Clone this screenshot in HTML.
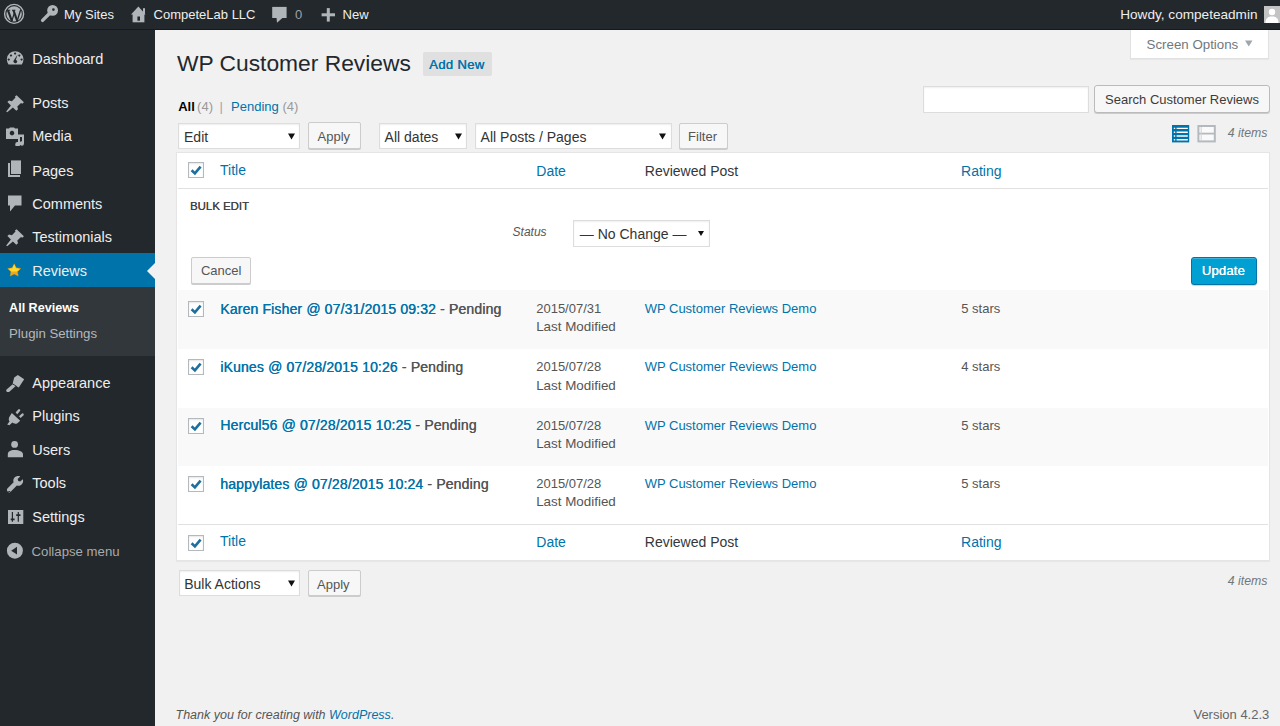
<!DOCTYPE html><html><head><meta charset="utf-8"><style>
html,body{margin:0;padding:0;width:1280px;height:726px;overflow:hidden;background:#f1f1f1;font-family:"Liberation Sans",sans-serif;}
.t{position:absolute;white-space:nowrap;}
.r{position:absolute;box-sizing:border-box;}
svg{position:absolute;}
</style></head><body>
<div class="r" style="left:0px;top:0px;width:1280px;height:30px;background:#23282d;"></div>
<div class="r" style="left:0px;top:29px;width:1280px;height:1px;background:#16191d;"></div>
<div class="r" style="left:0px;top:30px;width:155px;height:696px;background:#23282d;"></div>
<div class="r" style="left:0px;top:287px;width:155px;height:69px;background:#32373c;"></div>
<div class="r" style="left:0px;top:253px;width:155px;height:34px;background:#0073aa;"></div>
<div class="t" style="left:64.09px;top:4.50px;font-size:13px;line-height:20px;color:#eeeeee;">My Sites</div>
<div class="t" style="left:153.59px;top:4.50px;font-size:13px;line-height:20px;color:#eeeeee;">CompeteLab LLC</div>
<div class="t" style="left:295.09px;top:4.50px;font-size:13px;line-height:20px;color:#9ea3a8;">0</div>
<div class="t" style="left:342.59px;top:4.50px;font-size:13px;line-height:20px;color:#eeeeee;">New</div>
<div class="t" style="right:22.50px;top:5.09px;font-size:13.6px;line-height:20px;color:#eeeeee;">Howdy, competeadmin</div>
<div class="r" style="left:1264px;top:6px;width:16px;height:17px;background:#c7c7c7;"></div>
<div class="t" style="left:32.28px;top:48.98px;font-size:14.5px;line-height:20px;color:#eeeeee;">Dashboard</div>
<div class="t" style="left:32.28px;top:93.18px;font-size:14.5px;line-height:20px;color:#eeeeee;">Posts</div>
<div class="t" style="left:32.28px;top:126.48px;font-size:14.5px;line-height:20px;color:#eeeeee;">Media</div>
<div class="t" style="left:32.28px;top:160.98px;font-size:14.5px;line-height:20px;color:#eeeeee;">Pages</div>
<div class="t" style="left:32.28px;top:193.98px;font-size:14.5px;line-height:20px;color:#eeeeee;">Comments</div>
<div class="t" style="left:32.28px;top:227.48px;font-size:14.5px;line-height:20px;color:#eeeeee;">Testimonials</div>
<div class="t" style="left:32.28px;top:260.98px;font-size:14.5px;line-height:20px;color:#eeeeee;">Reviews</div>
<div class="t" style="left:9.04px;top:297.63px;font-size:12.6px;line-height:20px;color:#ffffff;font-weight:700;">All Reviews</div>
<div class="t" style="left:9.08px;top:324.13px;font-size:13.2px;line-height:20px;color:#b4b9be;">Plugin Settings</div>
<div class="t" style="left:32.28px;top:372.98px;font-size:14.5px;line-height:20px;color:#eeeeee;">Appearance</div>
<div class="t" style="left:32.28px;top:406.48px;font-size:14.5px;line-height:20px;color:#eeeeee;">Plugins</div>
<div class="t" style="left:32.28px;top:439.98px;font-size:14.5px;line-height:20px;color:#eeeeee;">Users</div>
<div class="t" style="left:32.28px;top:473.48px;font-size:14.5px;line-height:20px;color:#eeeeee;">Tools</div>
<div class="t" style="left:32.28px;top:506.98px;font-size:14.5px;line-height:20px;color:#eeeeee;">Settings</div>
<div class="t" style="left:31.58px;top:541.73px;font-size:13.2px;line-height:20px;color:#aaaaaa;">Collapse menu</div>
<div class="t" style="left:176.90px;top:52.80px;font-size:22.8px;line-height:20px;color:#23282d;">WP Customer Reviews</div>
<div class="r" style="left:422.6px;top:51.6px;width:69.39999999999998px;height:24.4px;background:#e0e0e0;border-radius:2px;"></div>
<div class="t" style="left:429.09px;top:54.50px;font-size:13px;line-height:20px;color:#0073aa;letter-spacing:0.38px;text-shadow:0.35px 0 0 #0073aa;">Add New</div>
<div class="r" style="left:1130px;top:30px;width:139px;height:29px;background:#ffffff;border:1px solid #e1e1e1;border-top:none;box-shadow:0 1px 1px rgba(0,0,0,.04);"></div>
<div class="t" style="left:1146.57px;top:35.19px;font-size:13.3px;line-height:20px;color:#72777c;">Screen Options</div>
<div class="t" style="left:178.22px;top:96.50px;font-size:13px;line-height:20px;color:#000000;font-weight:700;">All</div>
<div class="t" style="left:197.09px;top:96.50px;font-size:13px;line-height:20px;color:#999999;">(4)</div>
<div class="t" style="left:219.59px;top:96.50px;font-size:13px;line-height:20px;color:#a0a5aa;">|</div>
<div class="t" style="left:231.09px;top:96.50px;font-size:13px;line-height:20px;color:#0073aa;">Pending</div>
<div class="t" style="left:282.49px;top:96.50px;font-size:13px;line-height:20px;color:#999999;">(4)</div>
<div class="r" style="left:923px;top:85.5px;width:166px;height:27.5px;background:#ffffff;border:1px solid #ddd;box-shadow:inset 0 1px 2px rgba(0,0,0,.07);"></div>
<div class="r" style="left:1094px;top:85px;width:176px;height:28px;background:#f7f7f7;border:1px solid #bbb;border-radius:3px;box-shadow:0 1px 0 #ccc;"></div>
<div class="t" style="left:1105.09px;top:89.50px;font-size:13px;line-height:20px;color:#3c3c3c;">Search Customer Reviews</div>
<div class="t" style="right:12.50px;top:122.74px;font-size:12.3px;line-height:20px;color:#72777c;font-style:italic;">4 items</div>
<div class="r" style="left:178px;top:123px;width:122px;height:26.19999999999999px;background:#ffffff;border:1px solid #ddd;box-shadow:inset 0 1px 2px rgba(0,0,0,.07);"></div>
<div class="t" style="left:184.02px;top:126.65px;font-size:14px;line-height:20px;color:#333333;">Edit</div>
<svg style="left:288px;top:132.5px" width="7" height="7" viewBox="0 0 7 7"><path d="M0 0.6H7L3.5 6.6Z" fill="#111"/></svg>
<div class="r" style="left:307.5px;top:122px;width:53.5px;height:27px;background:#f7f7f7;border:1px solid #cccccc;border-radius:2px;box-shadow:0 1px 0 #cccccc;"></div>
<div class="t" style="left:317.59px;top:127.00px;font-size:13px;line-height:20px;color:#555555;">Apply</div>
<div class="r" style="left:379px;top:123px;width:88px;height:26.19999999999999px;background:#ffffff;border:1px solid #ddd;box-shadow:inset 0 1px 2px rgba(0,0,0,.07);"></div>
<div class="t" style="left:384.62px;top:126.65px;font-size:14px;line-height:20px;color:#333333;">All dates</div>
<svg style="left:454.5px;top:132.5px" width="7" height="7" viewBox="0 0 7 7"><path d="M0 0.6H7L3.5 6.6Z" fill="#111"/></svg>
<div class="r" style="left:475px;top:123px;width:197px;height:26.19999999999999px;background:#ffffff;border:1px solid #ddd;box-shadow:inset 0 1px 2px rgba(0,0,0,.07);"></div>
<div class="t" style="left:480.62px;top:126.65px;font-size:14px;line-height:20px;color:#333333;">All Posts / Pages</div>
<svg style="left:659px;top:132.5px" width="7" height="7" viewBox="0 0 7 7"><path d="M0 0.6H7L3.5 6.6Z" fill="#111"/></svg>
<div class="r" style="left:679px;top:123px;width:49px;height:26px;background:#f7f7f7;border:1px solid #cccccc;border-radius:2px;box-shadow:0 1px 0 #cccccc;"></div>
<div class="t" style="left:688.09px;top:127.00px;font-size:13px;line-height:20px;color:#555555;">Filter</div>
<div class="r" style="left:176px;top:152px;width:1094px;height:408.5px;background:#ffffff;border:1px solid #e5e5e5;box-shadow:0 1px 1px rgba(0,0,0,.04);"></div>
<div class="r" style="left:178px;top:188px;width:1090px;height:1px;background:#e1e1e1;"></div>
<div class="r" style="left:178px;top:524px;width:1090px;height:1px;background:#e1e1e1;"></div>
<div class="r" style="left:188px;top:162.2px;width:16px;height:16px;border:1px solid #b4b9be;background:#fff;box-shadow:inset 0 1px 2px rgba(0,0,0,.1);"></div>
<svg style="left:188px;top:162.2px" width="16" height="16" viewBox="0 0 16 16"><path d="M3.6 8.2L6.9 11.4L12.6 4.6" stroke="#1f6f9e" stroke-width="2.6" fill="none"/></svg>
<div class="t" style="left:220.02px;top:160.15px;font-size:14px;line-height:20px;color:#0073aa;">Title</div>
<div class="t" style="left:536.32px;top:160.65px;font-size:14px;line-height:20px;color:#0073aa;">Date</div>
<div class="t" style="left:644.82px;top:160.65px;font-size:14px;line-height:20px;color:#32373c;">Reviewed Post</div>
<div class="t" style="left:961.02px;top:160.65px;font-size:14px;line-height:20px;color:#0073aa;">Rating</div>
<div class="t" style="left:190.00px;top:195.65px;font-size:11.4px;line-height:20px;color:#444444;text-shadow:0.25px 0 0 #444;">BULK EDIT</div>
<div class="t" style="left:512.56px;top:221.84px;font-size:12px;line-height:20px;color:#555555;font-style:italic;">Status</div>
<div class="r" style="left:573px;top:219.5px;width:137px;height:27.0px;background:#ffffff;border:1px solid #ddd;box-shadow:inset 0 1px 2px rgba(0,0,0,.07);"></div>
<div class="t" style="left:579.82px;top:224.15px;font-size:14px;line-height:20px;color:#333333;">— No Change —</div>
<svg style="left:697.5px;top:230px" width="7" height="7" viewBox="0 0 7 7"><path d="M0 1H6L3 6Z" fill="#111"/></svg>
<div class="r" style="left:191px;top:257px;width:60px;height:27px;background:#f7f7f7;border:1px solid #cccccc;border-radius:2px;box-shadow:0 1px 0 #cccccc;"></div>
<div class="t" style="left:200.89px;top:261.30px;font-size:13px;line-height:20px;color:#555555;">Cancel</div>
<div class="r" style="left:1191px;top:257px;width:66px;height:28px;background:#00a0d2;border:1px solid #0073aa;border-radius:3px;box-shadow:inset 0 1px 0 rgba(120,200,230,.5),0 1px 0 rgba(0,0,0,.15);"></div>
<div class="t" style="left:1201.69px;top:261.10px;font-size:13px;line-height:20px;color:#ffffff;letter-spacing:0.2px;text-shadow:0.4px 0 0 #fff;">Update</div>
<div class="r" style="left:178px;top:289.5px;width:1090px;height:59.5px;background:#f9f9f9;"></div>
<div class="r" style="left:188px;top:301.0px;width:16px;height:16px;border:1px solid #b4b9be;background:#fff;box-shadow:inset 0 1px 2px rgba(0,0,0,.1);"></div>
<svg style="left:188px;top:301.0px" width="16" height="16" viewBox="0 0 16 16"><path d="M3.6 8.2L6.9 11.4L12.6 4.6" stroke="#1f6f9e" stroke-width="2.6" fill="none"/></svg>
<div class="t" style="left:220.2px;top:298.85px;font-size:14px;line-height:20px;letter-spacing:0.15px;text-shadow:0.3px 0 0 #0073aa;color:#0073aa">Karen Fisher @ 07/31/2015 09:32 <span style="color:#555;text-shadow:0.3px 0 0 #555">- Pending</span></div>
<div class="t" style="left:536.19px;top:299.20px;font-size:13px;line-height:20px;color:#555555;">2015/07/31</div>
<div class="t" style="left:536.16px;top:317.26px;font-size:13.4px;line-height:20px;color:#555555;">Last Modified</div>
<div class="t" style="left:644.69px;top:299.20px;font-size:13px;line-height:20px;color:#0073aa;">WP Customer Reviews Demo</div>
<div class="t" style="left:961.29px;top:299.20px;font-size:13px;line-height:20px;color:#555555;">5 stars</div>
<div class="r" style="left:188px;top:359.25px;width:16px;height:16px;border:1px solid #b4b9be;background:#fff;box-shadow:inset 0 1px 2px rgba(0,0,0,.1);"></div>
<svg style="left:188px;top:359.25px" width="16" height="16" viewBox="0 0 16 16"><path d="M3.6 8.2L6.9 11.4L12.6 4.6" stroke="#1f6f9e" stroke-width="2.6" fill="none"/></svg>
<div class="t" style="left:220.2px;top:357.10px;font-size:14px;line-height:20px;letter-spacing:0.15px;text-shadow:0.3px 0 0 #0073aa;color:#0073aa">iKunes @ 07/28/2015 10:26 <span style="color:#555;text-shadow:0.3px 0 0 #555">- Pending</span></div>
<div class="t" style="left:536.19px;top:357.45px;font-size:13px;line-height:20px;color:#555555;">2015/07/28</div>
<div class="t" style="left:536.16px;top:375.51px;font-size:13.4px;line-height:20px;color:#555555;">Last Modified</div>
<div class="t" style="left:644.69px;top:357.45px;font-size:13px;line-height:20px;color:#0073aa;">WP Customer Reviews Demo</div>
<div class="t" style="left:961.29px;top:357.45px;font-size:13px;line-height:20px;color:#555555;">4 stars</div>
<div class="r" style="left:178px;top:407.5px;width:1090px;height:58.5px;background:#f9f9f9;"></div>
<div class="r" style="left:188px;top:417.5px;width:16px;height:16px;border:1px solid #b4b9be;background:#fff;box-shadow:inset 0 1px 2px rgba(0,0,0,.1);"></div>
<svg style="left:188px;top:417.5px" width="16" height="16" viewBox="0 0 16 16"><path d="M3.6 8.2L6.9 11.4L12.6 4.6" stroke="#1f6f9e" stroke-width="2.6" fill="none"/></svg>
<div class="t" style="left:220.2px;top:415.35px;font-size:14px;line-height:20px;letter-spacing:0.15px;text-shadow:0.3px 0 0 #0073aa;color:#0073aa">Hercul56 @ 07/28/2015 10:25 <span style="color:#555;text-shadow:0.3px 0 0 #555">- Pending</span></div>
<div class="t" style="left:536.19px;top:415.70px;font-size:13px;line-height:20px;color:#555555;">2015/07/28</div>
<div class="t" style="left:536.16px;top:433.76px;font-size:13.4px;line-height:20px;color:#555555;">Last Modified</div>
<div class="t" style="left:644.69px;top:415.70px;font-size:13px;line-height:20px;color:#0073aa;">WP Customer Reviews Demo</div>
<div class="t" style="left:961.29px;top:415.70px;font-size:13px;line-height:20px;color:#555555;">5 stars</div>
<div class="r" style="left:188px;top:475.75px;width:16px;height:16px;border:1px solid #b4b9be;background:#fff;box-shadow:inset 0 1px 2px rgba(0,0,0,.1);"></div>
<svg style="left:188px;top:475.75px" width="16" height="16" viewBox="0 0 16 16"><path d="M3.6 8.2L6.9 11.4L12.6 4.6" stroke="#1f6f9e" stroke-width="2.6" fill="none"/></svg>
<div class="t" style="left:220.2px;top:473.60px;font-size:14px;line-height:20px;letter-spacing:0.15px;text-shadow:0.3px 0 0 #0073aa;color:#0073aa">happylates @ 07/28/2015 10:24 <span style="color:#555;text-shadow:0.3px 0 0 #555">- Pending</span></div>
<div class="t" style="left:536.19px;top:473.95px;font-size:13px;line-height:20px;color:#555555;">2015/07/28</div>
<div class="t" style="left:536.16px;top:492.01px;font-size:13.4px;line-height:20px;color:#555555;">Last Modified</div>
<div class="t" style="left:644.69px;top:473.95px;font-size:13px;line-height:20px;color:#0073aa;">WP Customer Reviews Demo</div>
<div class="t" style="left:961.29px;top:473.95px;font-size:13px;line-height:20px;color:#555555;">5 stars</div>
<div class="r" style="left:188px;top:535px;width:16px;height:16px;border:1px solid #b4b9be;background:#fff;box-shadow:inset 0 1px 2px rgba(0,0,0,.1);"></div>
<svg style="left:188px;top:535px" width="16" height="16" viewBox="0 0 16 16"><path d="M3.6 8.2L6.9 11.4L12.6 4.6" stroke="#1f6f9e" stroke-width="2.6" fill="none"/></svg>
<div class="t" style="left:220.02px;top:531.45px;font-size:14px;line-height:20px;color:#0073aa;">Title</div>
<div class="t" style="left:536.32px;top:531.95px;font-size:14px;line-height:20px;color:#0073aa;">Date</div>
<div class="t" style="left:644.82px;top:531.95px;font-size:14px;line-height:20px;color:#32373c;">Reviewed Post</div>
<div class="t" style="left:961.02px;top:531.95px;font-size:14px;line-height:20px;color:#0073aa;">Rating</div>
<div class="r" style="left:179px;top:570px;width:121px;height:26px;background:#ffffff;border:1px solid #ddd;box-shadow:inset 0 1px 2px rgba(0,0,0,.07);"></div>
<div class="t" style="left:184.22px;top:574.35px;font-size:14px;line-height:20px;color:#333333;">Bulk Actions</div>
<svg style="left:288px;top:580.2px" width="7" height="7" viewBox="0 0 7 7"><path d="M0 0.6H7L3.5 6.6Z" fill="#111"/></svg>
<div class="r" style="left:308px;top:570px;width:53px;height:26px;background:#f7f7f7;border:1px solid #cccccc;border-radius:2px;box-shadow:0 1px 0 #cccccc;"></div>
<div class="t" style="left:317.09px;top:574.70px;font-size:13px;line-height:20px;color:#555555;">Apply</div>
<div class="t" style="right:12.50px;top:570.74px;font-size:12.3px;line-height:20px;color:#72777c;font-style:italic;">4 items</div>
<div class="t" style="left:175.5px;top:704.57px;font-size:12.5px;line-height:20px;font-style:italic;color:#555">Thank you for creating with <span style="color:#0073aa">WordPress</span>.</div>
<div class="t" style="right:10.70px;top:705.10px;font-size:13px;line-height:20px;color:#666666;">Version 4.2.3</div>
<svg style="left:3px;top:3px" width="22" height="22" viewBox="0 0 22 22"><circle cx="11.1" cy="10.9" r="9.5" fill="none" stroke="#b0b5ba" stroke-width="1.4"/><circle cx="11.1" cy="10.9" r="7.7" fill="#b0b5ba"/><g fill="none" stroke="#23282d" stroke-linecap="butt"><path d="M4.9 7.2L8.9 18.2" stroke-width="2.1"/><path d="M8.7 18.2L11.3 10.2" stroke-width="1.2"/><path d="M10.4 7.2L14.3 18.2" stroke-width="2.1"/><path d="M14.1 18.2L17.6 7" stroke-width="1.3"/><path d="M3.6 7.2H7.2M9 7.2H12.4" stroke-width="1.1"/></g></svg>
<svg style="left:39px;top:4px" width="20" height="20" viewBox="0 0 20 20"><circle cx="13.6" cy="6.4" r="5.4" fill="#b0b5ba"/><circle cx="14.4" cy="5.6" r="1.3" fill="#23282d"/><path d="M10.5 9.5L3.6 16.4" stroke="#b0b5ba" stroke-width="3.4" stroke-linecap="round"/></svg>
<svg style="left:130px;top:6px" width="17" height="17" viewBox="0 0 17 17"><path d="M1 8.6L8.4 0.6L15.6 8.6Z" fill="#b0b5ba"/><rect x="13" y="2.2" width="2" height="6" fill="#b0b5ba"/><rect x="2.6" y="8" width="11.8" height="8.3" fill="#b0b5ba"/><rect x="7.4" y="10.5" width="2.6" height="4.2" fill="#23282d"/></svg>
<svg style="left:272px;top:6px" width="16" height="18" viewBox="0 0 16 18"><rect x="0.2" y="0.9" width="14.4" height="11.1" fill="#b0b5ba"/><path d="M4.5 11.5H11L5 16.8Z" fill="#b0b5ba"/></svg>
<svg style="left:321px;top:8px" width="15" height="14" viewBox="0 0 15 14"><rect x="0.6" y="5.3" width="13.4" height="3" fill="#b0b5ba"/><rect x="5.8" y="0.1" width="3" height="13.5" fill="#b0b5ba"/></svg>
<svg style="left:1264px;top:6px" width="16" height="17" viewBox="0 0 16 17"><rect width="16" height="17" fill="#c4c4c4"/><circle cx="8" cy="6" r="3.2" fill="#fff"/><path d="M1.5 17C1.5 12 4 10.5 8 10.5S14.5 12 14.5 17Z" fill="#fff"/></svg>
<svg style="left:5px;top:49px" width="21" height="18" viewBox="0 0 21 18"><path fill-rule="evenodd" fill="#b0b5ba" d="M3.5 15.4H16.8A8.3 8.3 0 1 0 3.5 15.4Z M10.1 3.6a1 1 0 1 0 .01 0Z M6 5.4a1 1 0 1 0 .01 0Z M14.3 5.4a1 1 0 1 0 .01 0Z M3.7 9.5a1 1 0 1 0 .01 0Z M16.6 9.5a1 1 0 1 0 .01 0Z M9.6 13.9a1.6 1.6 0 1 0 1.2-2.9L12.6 5.6L8.9 11.2a1.6 1.6 0 0 0 .7 2.7Z"/></svg>
<svg style="left:5px;top:94px" width="20" height="19" viewBox="0 0 20 19"><path fill="#b0b5ba" d="M11.6 1.2L18.9 8.3L17.3 9.7L16 8.9L12.3 12.4L13 15.2L11.3 16.8L7.9 13.4L2.2 18.2L1.2 17.5L5.9 11.5L2.4 8L4 6.5L6.9 7.2L10.5 3.6L9.9 2.5Z"/></svg>
<svg style="left:5px;top:127px" width="20" height="19" viewBox="0 0 20 19"><path fill-rule="evenodd" fill="#b0b5ba" d="M1 1.5H4L5 0.6H9L10 1.5H13V12H1Z M7 3.8a2.3 2.3 0 1 0 .01 0Z"/><path fill="#b0b5ba" d="M13 7.5H19V16.5A2.2 2.2 0 1 1 17 14.3V10H15V17A2.4 2.4 0 1 1 13 15Z"/></svg>
<svg style="left:6px;top:159px" width="20" height="20" viewBox="0 0 20 20"><path fill="#b0b5ba" d="M2 4H4V16H14V18H2Z"/><path fill="#b0b5ba" d="M5 1.4H15V15H5Z"/></svg>
<svg style="left:6px;top:194px" width="18" height="19" viewBox="0 0 18 19"><path fill="#b0b5ba" d="M2 1.5H15.5V11.5H9L4 17.5V11.5H2Z"/></svg>
<svg style="left:5px;top:228px" width="20" height="19" viewBox="0 0 20 19"><path fill="#b0b5ba" d="M11.6 1.2L18.9 8.3L17.3 9.7L16 8.9L12.3 12.4L13 15.2L11.3 16.8L7.9 13.4L2.2 18.2L1.2 17.5L5.9 11.5L2.4 8L4 6.5L6.9 7.2L10.5 3.6L9.9 2.5Z"/></svg>
<svg style="left:6px;top:262px" width="16" height="16" viewBox="0 0 16 16"><path fill="#f5a814" stroke="#f0a000" stroke-width="0.4" stroke-linejoin="round" d="M8.20 1.80L10.20 5.85L14.67 6.50L11.43 9.65L12.20 14.10L8.20 12.00L4.20 14.10L4.97 9.65L1.73 6.50L6.20 5.85Z"/><path fill="#ffd92e" d="M8.20 2.6L9.9 6.3L13.9 6.9L11 9.4L8.2 9.6L5.4 9.4L2.5 6.9L6.5 6.3Z"/></svg>
<svg style="left:147px;top:263px" width="8" height="16" viewBox="0 0 8 16"><path d="M8 0L0 8L8 16Z" fill="#f1f1f1"/></svg>
<svg style="left:5px;top:374px" width="20" height="18" viewBox="0 0 20 18"><path fill="#b0b5ba" d="M9.2 3.6L12.8 0.9L19.2 5.2L13.8 13.5L7.6 10Z"/><path d="M9.6 10.8L3 16.6" stroke="#b0b5ba" stroke-width="3.4" stroke-linecap="round"/><path d="M7.2 9.6L11.6 12.4" stroke="#23282d" stroke-width="0.9"/></svg>
<svg style="left:5px;top:407px" width="20" height="19" viewBox="0 0 20 19"><path fill="#b0b5ba" d="M13.2 2.5a1.2 1.2 0 0 1 1.8 1.6L12.3 7.2L10.6 5.6Z M17 6.5a1.2 1.2 0 0 1 1.6 1.7L15.6 10.9L14 9.2Z M6.8 6L15.2 13.8L12.4 16.2C10.8 17.2 8.6 16.8 7.4 15.6L4.4 18.3L2.2 17.5L4.5 14.5C3.4 12.8 3.6 11 4.6 9.5Z"/></svg>
<svg style="left:5px;top:437px" width="20" height="21" viewBox="0 0 20 21"><circle cx="9.6" cy="7.4" r="3.4" fill="#b0b5ba"/><path fill="#b0b5ba" d="M2.8 20.3V17.5C2.8 14.6 5 13 9.6 13S18 14.6 18 17.5V20.3Z"/></svg>
<svg style="left:5px;top:474px" width="20" height="20" viewBox="0 0 20 20"><path fill="#b0b5ba" fill-rule="evenodd" d="M17.8 5.2L15.2 7.6L13.3 7L12.6 5.1L15.2 2.5C13.4 1.6 11 2 9.6 3.5C8.3 4.8 8 6.6 8.6 8.2L2.6 14.2C1.7 15.1 1.7 16.6 2.6 17.5C3.5 18.4 5 18.4 5.9 17.5L11.9 11.5C13.5 12.1 15.3 11.8 16.6 10.5C18.1 9 18.5 7 17.8 5.2Z M4.2 16.9a0.9 0.9 0 1 0 .01 0Z"/></svg>
<svg style="left:5px;top:507px" width="20" height="20" viewBox="0 0 20 20"><rect x="3" y="3" width="15.3" height="14" fill="#b0b5ba"/><path stroke="#23282d" stroke-width="1.2" d="M7.4 5V14.8M13.3 5V14.8"/><path stroke="#23282d" stroke-width="1.8" d="M5.7 12.3H9.6M11.2 8.1H15.5"/></svg>
<svg style="left:5px;top:541px" width="20" height="20" viewBox="0 0 20 20"><circle cx="9.9" cy="9.7" r="8" fill="#b0b5ba"/><path d="M6.2 9.7L12 5.8V13.6Z" fill="#23282d"/></svg>
<svg style="left:1245px;top:40px" width="8" height="7" viewBox="0 0 8 7"><path d="M0 0.5H7.5L3.75 6.5Z" fill="#a0a5aa"/></svg>
<svg style="left:1171px;top:124px" width="20" height="20" viewBox="0 0 20 20"><rect x="1" y="1" width="17.2" height="17.4" fill="#0073aa"/><path stroke="#ffffff" stroke-width="1.4" d="M2.8 4.4H4.2M5.6 4.4H16.8M2.8 8.2H4.2M5.6 8.2H16.8M2.8 12H4.2M5.6 12H16.8M2.8 15.8H4.2M5.6 15.8H16.8"/></svg>
<svg style="left:1196px;top:124px" width="21" height="20" viewBox="0 0 21 20"><rect x="2.4" y="2" width="16.4" height="15.4" fill="#fafafa" stroke="#b4b9be" stroke-width="2"/><path stroke="#b4b9be" stroke-width="1.8" d="M2.4 9.6H18.8"/><path stroke="#d0d3d6" stroke-width="1" d="M5.2 3V16.4"/></svg>
</body></html>
